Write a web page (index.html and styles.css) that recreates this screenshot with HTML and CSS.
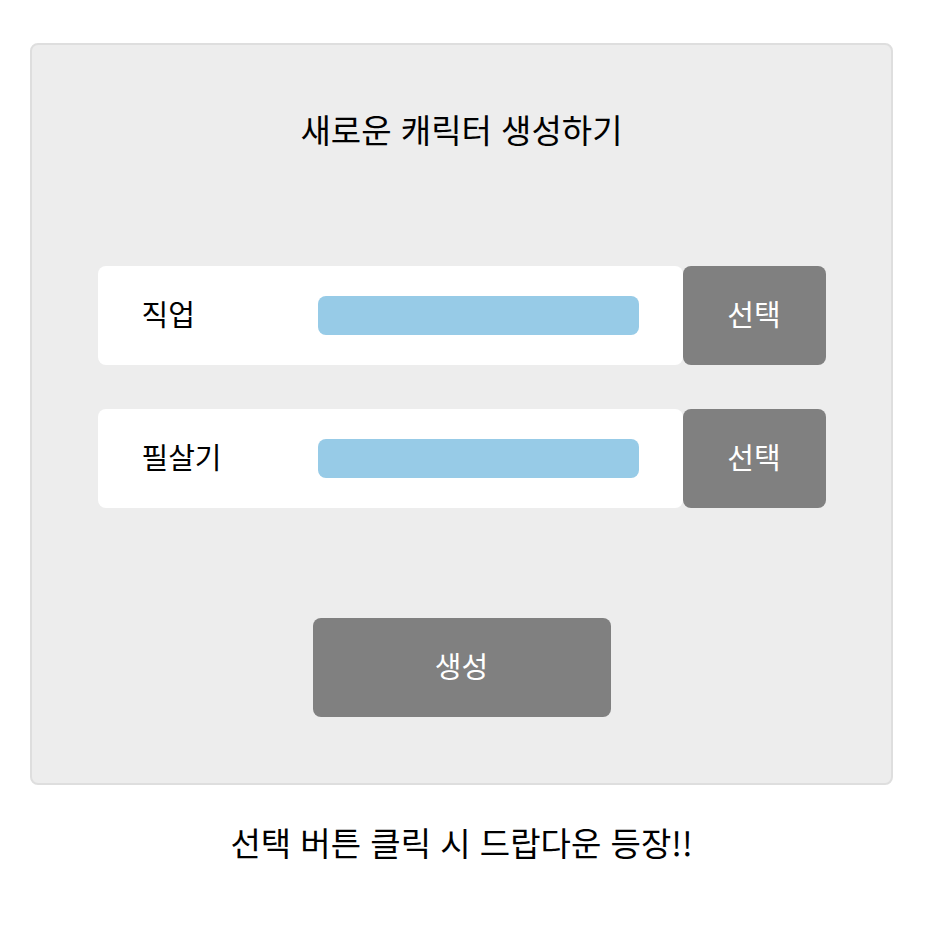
FILE: index.html
```html
<!DOCTYPE html>
<html lang="ko">
<head>
<meta charset="utf-8">
<link rel="stylesheet" href="styles.css">
</head>
<body>
<div class="page">
  <div class="card">
    <h1 class="title">새로운 캐릭터 생성하기</h1>
    <div class="rows">
      <div class="row">
        <div class="field">
          <span class="label">직업</span>
          <div class="bar"></div>
        </div>
        <button class="select">선택</button>
      </div>
      <div class="row">
        <div class="field">
          <span class="label">필살기</span>
          <div class="bar"></div>
        </div>
        <button class="select">선택</button>
      </div>
    </div>
    <div class="actions">
      <button class="create">생성</button>
    </div>
  </div>
  <p class="note">선택 버튼 클릭 시 드랍다운 등장!!</p>
</div>
</body>
</html>
```
FILE: styles.css
```css
* { box-sizing: border-box; }
body {
  margin: 0;
  background: #fff;
  font-family: "Noto Sans CJK KR", "Noto Sans", sans-serif;
  color: #000;
}
.page {
  width: 923px;
  padding-top: 43px;
}
.card {
  width: 863px;
  margin: 0 auto;
  background: #ededed;
  border: 2px solid #dedede;
  border-radius: 8px;
  padding: 60px 0 66px;
}
.title {
  margin: 0;
  text-align: center;
  font-size: 33px;
  font-weight: 400;
  line-height: 48px;
}
.rows {
  margin-top: 113px;
  display: flex;
  flex-direction: column;
  align-items: center;
  gap: 44px;
}
.row {
  display: flex;
  height: 99px;
}
.field {
  width: 585px;
  background: #fff;
  border-radius: 8px;
  display: flex;
  align-items: center;
  padding: 0 44px;
}
.label {
  width: 176px;
  font-size: 29px;
  line-height: 40px;
  padding-bottom: 6px;
}
.bar {
  width: 321px;
  height: 39px;
  background: #97cbe7;
  border-radius: 8px;
}
.select, .create {
  border: none;
  background: #808080;
  color: #fff;
  font-family: inherit;
  font-size: 29px;
  border-radius: 8px;
  padding: 0 0 6px;
}
.select {
  width: 143px;
  height: 99px;
}
.actions {
  margin-top: 110px;
  display: flex;
  justify-content: center;
}
.create {
  width: 298px;
  height: 99px;
}
.note {
  margin: 33px 0 0;
  text-align: center;
  font-size: 33px;
  line-height: 48px;
}
```
